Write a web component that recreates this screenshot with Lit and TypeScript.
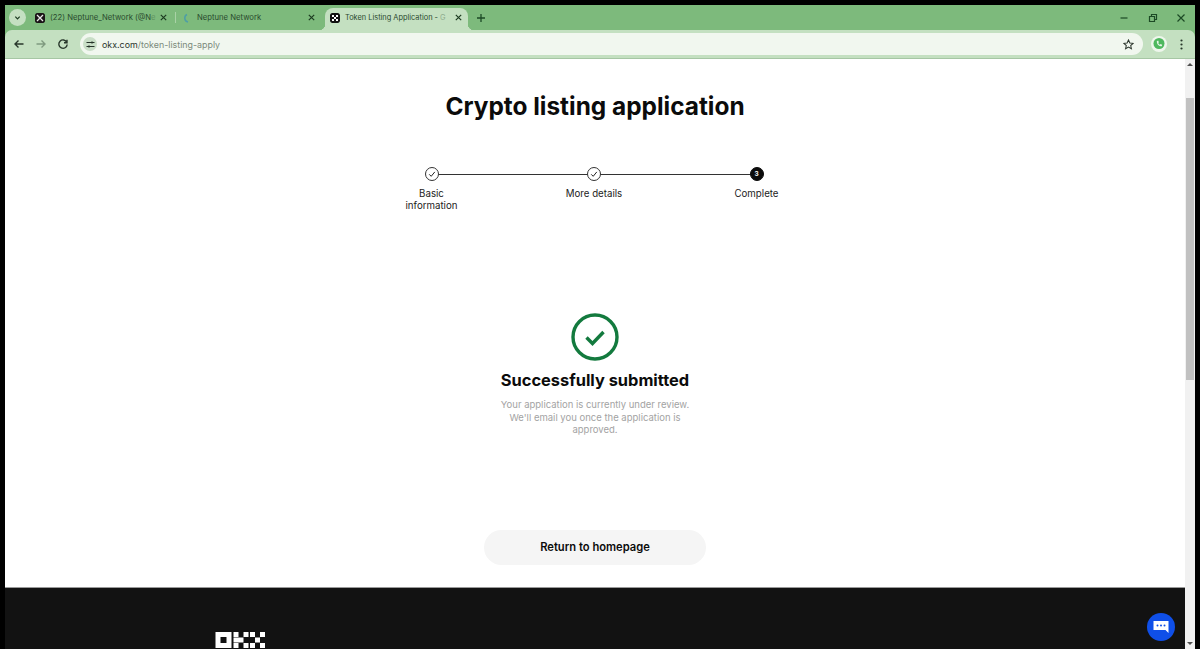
import { LitElement, html, css } from "lit";
import { customElement } from "lit/decorators.js";

const closeIcon = html`<svg class="x" viewBox="0 0 10 10"><path d="M2 2l6 6M8 2l-6 6"/></svg>`;
const check = html`<svg viewBox="0 0 14 14" width="14" height="14"><path d="M4.2 7.3l2 2 3.6-4.4" fill="none" stroke="#222" stroke-width="1"/></svg>`;

const okxLogo = html`<svg class="okx" viewBox="0 0 50 16" width="51" height="16">
  <path fill-rule="evenodd" fill="#fff" d="M0 0h16v16H0zM5 5v6h6V5z"/>
  <path fill="#fff" d="M18 0h5v5h-5zM18 5.500h5v5h-5zM18 11h5v5h-5zM23 5.500h5v5h-5zM28 0h5v5h-5zM28 11h5v5h-5zM34.500 0h5v5h-5zM44.500 0h5v5h-5zM39.500 5.500h5v5h-5zM34.500 11h5v5h-5zM44.500 11h5v5h-5z"/>
</svg>`;

@customElement("app-root")
export class AppRoot extends LitElement {
  static styles = css`
    :host { display: block; height: 649px; overflow: hidden; background: #000; font-family: "Inter", "Liberation Sans", sans-serif; }
    .frame { height: 649px; box-sizing: border-box; padding: 5px 5px 0; display: flex; flex-direction: column; }
    .tabs { height: 25px; background: #7dba7c; display: flex; align-items: flex-end; padding-left: 4px; flex: none; }
    .down { width: 17px; height: 17px; border-radius: 50%; background: #c5e0c2; display: flex; align-items: center; justify-content: center; margin: 0 5px 0 0; align-self: center; flex: none; }
    .tab { height: 25px; display: flex; align-items: center; box-sizing: border-box; font-size: 7.700px; color: #2a4a2e; white-space: nowrap; flex: none; }
    .tab .title { flex: 1; margin-left: 5px; min-width: 0; }
    .fade { opacity: 0.35; }
    .t1 { width: 144px; padding: 0 7.500px 0 4px; }
    .t2 { width: 149px; padding: 0 9px 0 7px; }
    .t2 .title { margin-left: 4px; }
    .t3 { width: 143px; height: 22px; padding: 0 5px 3px 5px; background: #c4e0c1; border-radius: 8px 8px 0 0; position: relative; font-size: 7.400px; }
    .t3::before, .t3::after { content: ""; position: absolute; bottom: 0; width: 6px; height: 6px; }
    .t3::before { left: -6px; background: radial-gradient(circle at 0 0, transparent 6px, #c4e0c1 6.500px); }
    .t3::after { right: -6px; background: radial-gradient(circle at 100% 0, transparent 6px, #c4e0c1 6.500px); }
    .sep { width: 1px; height: 11px; background: #a9d2a6; flex: none; align-self: center; }
    .fav { width: 10px; height: 10px; border-radius: 2px; flex: none; display: block; }
    .x { width: 9px; height: 9px; flex: none; fill: none; stroke: #1c3a20; stroke-width: 1.300; }
    .plus { width: 10px; height: 10px; margin: 0 0 0 8px; fill: none; stroke: #1c4a25; stroke-width: 1.300; align-self: center; flex: none; }
    .grow { flex: 1; }
    .win { display: flex; align-items: center; gap: 18.500px; padding-right: 9px; align-self: center; }
    .win svg { width: 10px; height: 10px; fill: none; stroke: #1c4a25; stroke-width: 1.200; display: block; }
    .bar { background: #7dba7c; flex: none; }
    .toolbar { height: 29px; background: #c4e0c1; display: flex; align-items: center; padding-left: 7.500px; box-sizing: border-box; border-bottom: 1px solid #a6c6a4; border-radius: 7px 7px 0 0; }
    .nav { width: 12px; height: 12px; fill: none; stroke: #28372b; stroke-width: 1.400; flex: none; }
    .nav.dim { stroke: #7f9a80; margin-left: 10.500px; }
    .nav.r { margin-left: 10px; }
    .omni { width: 1063px; height: 22px; background: #f1f7ef; border-radius: 11px; margin-left: 11px; display: flex; align-items: center; flex: none; font-size: 8.900px; color: #7b8a7b; }
    .tune { width: 14px; height: 14px; border-radius: 50%; background: #c9dec7; margin: 0 5px 0 3px; display: flex; align-items: center; justify-content: center; flex: none; }
    .omni b { font-weight: 400; color: #2b352c; }
    .star { width: 11px; height: 11px; fill: none; stroke: #2b352c; stroke-width: 1.100; margin-left: auto; margin-right: 9px; flex: none; }
    .ext { margin-left: 8px; width: 16px; height: 16px; flex: none; display: block; }
    .dots { width: 3px; height: 11px; margin-left: 13px; fill: #28372b; flex: none; }
    .view { flex: 1; display: flex; min-height: 0; background: #fff; }
    .page { flex: 1; display: flex; flex-direction: column; min-width: 0; }
    .content { height: 528px; flex: none; display: flex; flex-direction: column; align-items: center; box-sizing: border-box; padding-top: 31px; color: #000; }
    h1 { margin: 0; font-size: 24.400px; line-height: 32px; font-weight: 700; color: #0b0b0b; }
    .steps { width: 325px; margin: 45px 2px 0 0; display: flex; justify-content: space-between; position: relative; height: 40px; flex: none; }
    .line { position: absolute; left: 0; right: 0; top: 7px; height: 1px; background: #333; }
    .step { width: 0; position: relative; display: flex; flex-direction: column; align-items: center; font-size: 9.700px; line-height: 12px; color: #222; text-align: center; }
    .circle { width: 14px; height: 14px; border-radius: 50%; background: #fff; border: 1px solid #333; box-sizing: border-box; display: flex; align-items: center; justify-content: center; flex: none; }
    .circle svg { flex: none; }
    .circle.on { background: #0b0b0b; border-color: #0b0b0b; color: #fff; font-size: 6.500px; font-weight: 700; }
    .lab { margin-top: 7px; width: 70px; flex: none; }
    .big { margin-top: 106px; width: 48px; height: 48px; display: block; flex: none; }
    h2 { margin: 7px 0 0; font-size: 16.400px; line-height: 24px; font-weight: 700; color: #0b0b0b; }
    p { margin: 7px 0 0; width: 200px; font-size: 9.500px; line-height: 12.500px; color: #a3a3a3; text-align: center; }
    .btn { margin-top: 93px; width: 222px; height: 35px; border-radius: 18px; background: #f5f5f5; display: flex; align-items: center; justify-content: center; font-size: 11.200px; font-weight: 600; color: #0b0b0b; flex: none; }
    .footer { flex: 1; background: #121212; border-top: 1px solid #9a9a9a; padding: 44px 0 0 210px; position: relative; overflow: hidden; }
    .okx { display: block; }
    .chat { position: absolute; left: 1142px; top: 25px; width: 28px; height: 28px; border-radius: 50%; background: #0f4fe8; display: flex; align-items: center; justify-content: center; }
    .scroll { width: 10px; background: #f1f1f1; flex: none; position: relative; }
    .thumb { position: absolute; left: 1px; right: 1px; top: 39px; height: 282px; background: #c1c1c1; }
    .tri { width: 0; height: 0; left: 1.500px; border-left: 3.500px solid transparent; border-right: 3.500px solid transparent; position: absolute; }
    .tri.u { top: 4px; border-bottom: 3px solid #505050; }
    .tri.d { bottom: 4px; border-top: 3px solid #505050; }
  `;

  render() {
    const favOkx = html`<svg class="fav" viewBox="0 0 10 10"><rect width="10" height="10" rx="2" fill="#111"/><path fill="#fff" d="M2 2h2v2H2zM6 2h2v2H6zM4 4h2v2H4zM2 6h2v2H2zM6 6h2v2H6z"/></svg>`;
    return html`<div class="frame">
      <div class="tabs">
        <div class="down"><svg width="7" height="7" viewBox="0 0 8 8"><path d="M1.500 3l2.500 2.500L6.500 3" fill="none" stroke="#1c3a20" stroke-width="1.400"/></svg></div>
        <div class="tab t1">
          <svg class="fav" viewBox="0 0 10 10"><rect width="10" height="10" rx="1.500" fill="#1a1416"/><path d="M2 2l6 6M8 2L2 8" stroke="#e8e8e8" stroke-width="1.300"/></svg>
          <span class="title">(22) Neptune_Network (@N<span class="fade">e</span></span>
          ${closeIcon}
        </div>
        <div class="sep"></div>
        <div class="tab t2">
          <svg class="fav" viewBox="0 0 10 10"><path d="M4 1.500a4 4 0 0 0 1 7.500" fill="none" stroke="#4e9fa6" stroke-width="1.500"/></svg>
          <span class="title">Neptune Network</span>
          ${closeIcon}
        </div>
        <div class="tab t3">
          ${favOkx}
          <span class="title">Token Listing Application - <span class="fade">G</span></span>
          ${closeIcon}
        </div>
        <svg class="plus" viewBox="0 0 10 10"><path d="M5 1v8M1 5h8"/></svg>
        <div class="grow"></div>
        <div class="win">
          <svg viewBox="0 0 10 10"><path d="M1.500 5h7"/></svg>
          <svg viewBox="0 0 10 10"><path d="M1.500 3.500h5v5h-5zM3.500 3.500v-2h5v5h-2"/></svg>
          <svg viewBox="0 0 10 10"><path d="M1.500 1.500l7 7M8.500 1.500l-7 7"/></svg>
        </div>
      </div>
      <div class="bar"><div class="toolbar">
        <svg class="nav" viewBox="0 0 12 12"><path d="M10.500 6h-8.500M5.500 2.500L2 6l3.500 3.500"/></svg>
        <svg class="nav dim" viewBox="0 0 12 12"><path d="M1.500 6h8.500M6.500 2.500L10 6l-3.500 3.500"/></svg>
        <svg class="nav r" viewBox="0 0 12 12"><path d="M9.800 4.300A4.200 4.200 0 1 0 10.200 6.500M10 1.800v3h-3" /></svg>
        <div class="omni">
          <span class="tune"><svg width="9" height="9" viewBox="0 0 9 9"><path d="M0.500 2.500h4.500M7 2.500h1.500M0.500 6.500h1.500M4 6.500h4.500" stroke="#26332a" stroke-width="1" fill="none"/><circle cx="6" cy="2.500" r="1.100" fill="#26332a"/><circle cx="3" cy="6.500" r="1.100" fill="#26332a"/></svg></span>
          <span><b>okx.com</b>/token-listing-apply</span>
          <svg class="star" viewBox="0 0 12 12"><path d="M6 1l1.500 3.300 3.600.4-2.700 2.400.8 3.600L6 8.900l-3.200 1.800.8-3.600L.9 4.700l3.600-.4z"/></svg>
        </div>
        <svg class="ext" viewBox="0 0 16 16"><circle cx="8" cy="8" r="8" fill="#eef6ec"/><circle cx="8" cy="7.500" r="5.500" fill="#4fb85f"/><path d="M5.800 5.200c0 3 2 5 5 5l.4-1.400-1.700-.8-.7.700c-.8-.4-1.300-1-1.600-1.700l.7-.7-.8-1.700z" fill="#e6f5e6"/></svg>
        <svg class="dots" viewBox="0 0 3 11"><circle cx="1.500" cy="1.500" r="1.100"/><circle cx="1.500" cy="5.500" r="1.100"/><circle cx="1.500" cy="9.500" r="1.100"/></svg>
      </div></div>
      <div class="view">
        <div class="page">
          <div class="content">
            <h1>Crypto listing application</h1>
            <div class="steps">
              <div class="line"></div>
              <div class="step"><div class="circle">${check}</div><div class="lab">Basic information</div></div>
              <div class="step"><div class="circle">${check}</div><div class="lab">More details</div></div>
              <div class="step"><div class="circle on">3</div><div class="lab">Complete</div></div>
            </div>
            <svg class="big" viewBox="0 0 48 48"><circle cx="24" cy="24" r="22" fill="none" stroke="#137a3e" stroke-width="3.400"/><path d="M15.500 24.500l6 6 11-11.500" fill="none" stroke="#137a3e" stroke-width="3.400"/></svg>
            <h2>Successfully submitted</h2>
            <p>Your application is currently under review. We'll email you once the application is approved.</p>
            <div class="btn">Return to homepage</div>
          </div>
          <div class="footer">
            ${okxLogo}
            <div class="chat"><svg width="18" height="16" viewBox="0 0 18 16"><path fill="#fff" d="M1.500 2h15v12l-3-3h-12z"/><circle cx="5.500" cy="6.500" r="1" fill="#0f4fe8"/><circle cx="9" cy="6.500" r="1" fill="#0f4fe8"/><circle cx="12.500" cy="6.500" r="1" fill="#0f4fe8"/></svg></div>
          </div>
        </div>
        <div class="scroll"><div class="tri u"></div><div class="thumb"></div><div class="tri d"></div></div>
      </div>
    </div>`;
  }
}
